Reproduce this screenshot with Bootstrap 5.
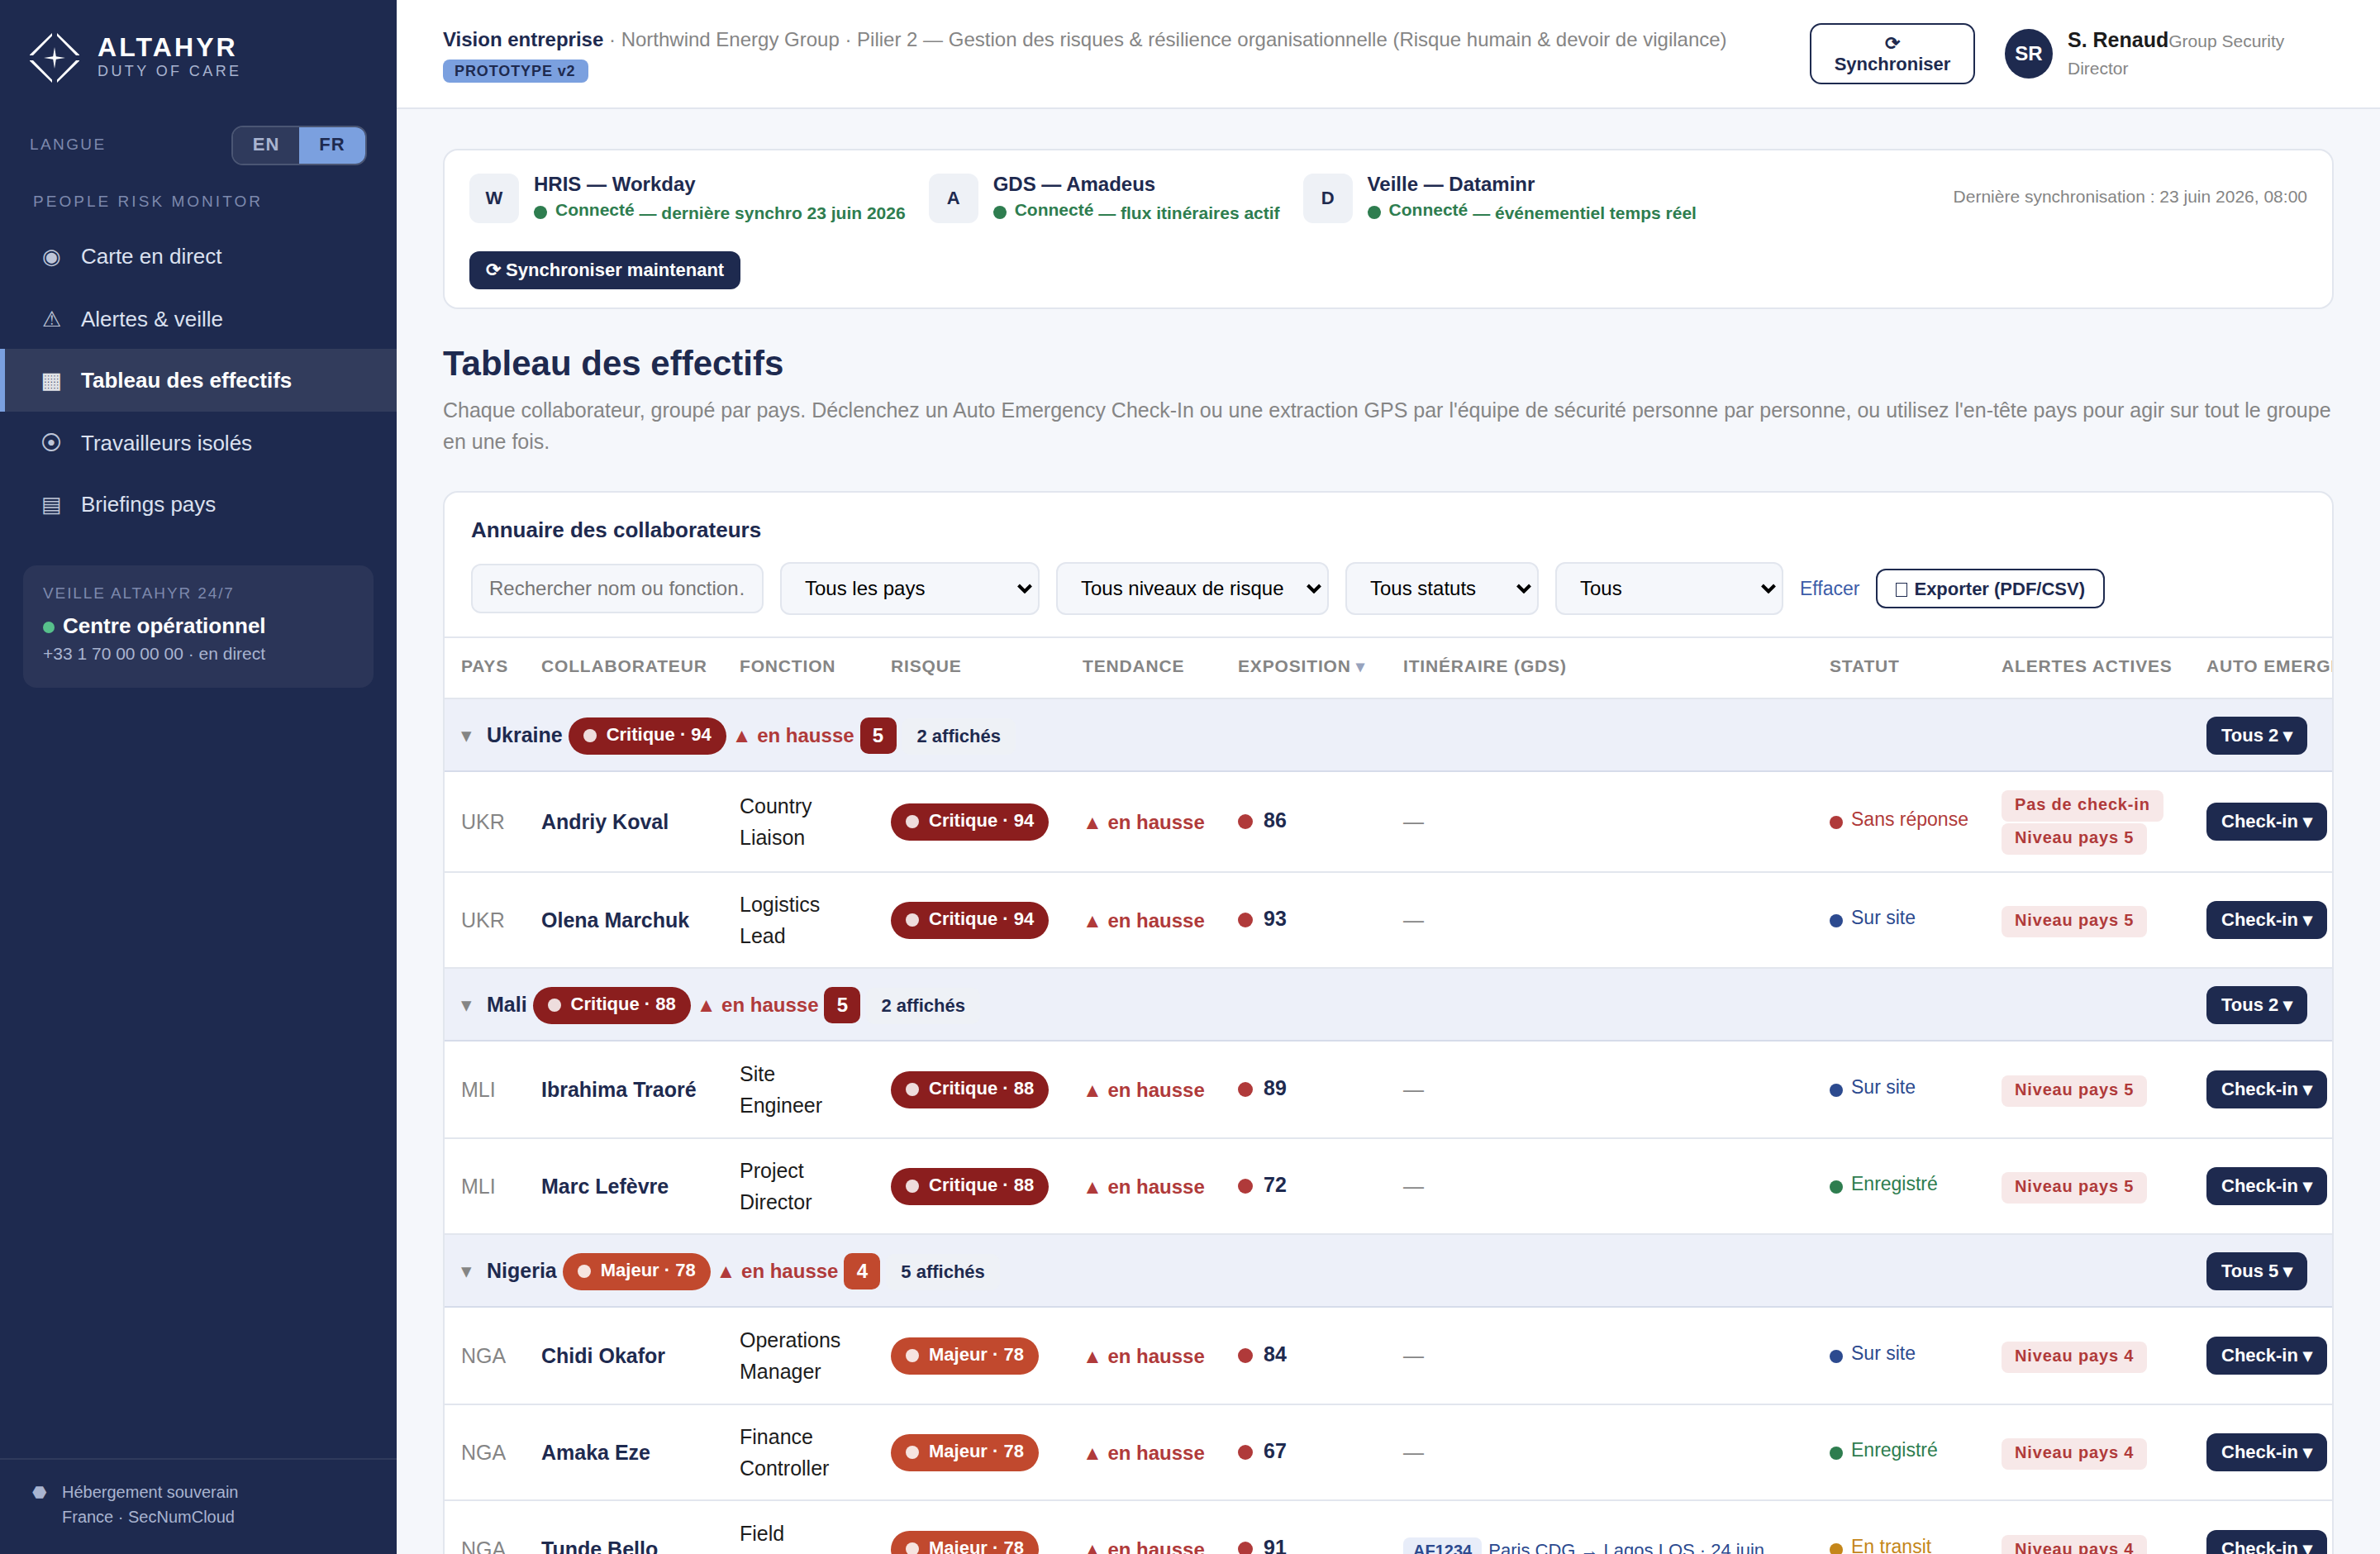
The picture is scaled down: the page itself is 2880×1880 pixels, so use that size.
<!DOCTYPE html>
<html lang="fr">
<head>
    <meta charset="UTF-8">
    <meta name="viewport" content="width=device-width, initial-scale=1">
    <title>Altahyr - Tableau des effectifs</title>
    <link rel="stylesheet" href="https://cdn.jsdelivr.net/npm/bootstrap@5.3.0/dist/css/bootstrap.min.css">
    <style>
        :root {
            --navy: #1e2a4f;
            --sky: #7ba0df;
            --line: #e2e6ee;
            --paper: #f5f7fb;
            --grey: #858585;
            --red: #b03a3a;
            --green: #2e7d4f;
            --blue: #2c4a8f;
        }

        body {
            background-color: var(--paper);
            color: #1c1c1c;
            font-family: "Liberation Sans", Arial, sans-serif;
            font-size: 25px;
            line-height: 38px;
            height: 1880px;
            overflow: hidden;
        }

        /* Sidebar */
        .sidebar {
            width: 480px;
            height: 1880px;
            background-color: var(--navy);
            padding-top: 40px;
        }

        .brand {
            padding-left: 36px;
            gap: 22px;
            height: 60px;
        }

        .brand-text {
            margin-top: -5px;
        }

        .brand-name {
            font-size: 32px;
            line-height: 36px;
            letter-spacing: 3.1px;
            color: #fff;
        }

        .brand-sub {
            font-size: 18px;
            line-height: 22px;
            letter-spacing: 3.4px;
            color: #a9b4d0;
        }

        .lang-row {
            margin-top: 52px;
            padding: 0 36px;
            height: 48px;
        }

        .side-label {
            font-size: 19px;
            line-height: 28px;
            color: #7d89ad;
        }

        .lang-row .side-label {
            letter-spacing: 2.4px;
            padding-bottom: 3px;
        }

        .lang-switch {
            border: 2px solid #4b5674;
            border-radius: 14px;
            overflow: hidden;
            height: 48px;
        }

        .lang-switch span {
            width: 80px;
            text-align: center;
            font-size: 22px;
            line-height: 42px;
            letter-spacing: 1px;
            background-color: #2f3a5c;
            color: #a9b4d0;
        }

        .lang-switch .on {
            background-color: var(--sky);
            color: var(--navy);
        }

        .section-label {
            margin: 30px 0 14px 40px;
            letter-spacing: 3.04px;
        }

        .side-nav .nav-link {
            display: flex;
            height: 75px;
            align-items: center;
            padding: 0 0 0 44px;
            border-left: 6px solid transparent;
            border-radius: 0;
            font-size: 26px;
            color: #dbe1f0;
        }

        .side-nav .nav-link:nth-child(even) {
            padding-top: 2px;
        }

        .side-nav .nav-link.active {
            height: 76px;
            margin-bottom: -1px;
            background-color: #323c5c;
            border-left-color: var(--sky);
            color: #fff;
            font-weight: 700;
        }

        .nav-ico {
            width: 24px;
            margin-right: 24px;
            display: flex;
            justify-content: center;
            opacity: .85;
        }

        .ops-box {
            margin: 37px 28px 0;
            height: 148px;
            padding: 19px 24px;
            border-radius: 16px;
            background-color: #2b3558;
        }

        .ops-box .side-label {
            line-height: 30px;
            letter-spacing: 1.9px;
        }

        .ops-name {
            margin-top: 4px;
            font-size: 26px;
            line-height: 40px;
            color: #fff;
        }

        .ops-dot {
            width: 14px;
            height: 14px;
            margin: 4px 10px 0 0;
            border-radius: 50%;
            background-color: #57c08b;
        }

        .ops-phone {
            font-size: 21px;
            line-height: 28px;
            color: #a9b4d0;
        }

        .side-foot {
            border-top: 2px solid #2f3a5c;
            padding: 24px 0 30px 39px;
            font-size: 20px;
            line-height: 30px;
            color: #a9b4d0;
        }

        .side-foot .hexa {
            width: 36px;
        }

        .dot {
            display: inline-block;
            width: 16px;
            height: 16px;
            border-radius: 50%;
            background-color: currentColor;
            margin-right: 10px;
        }

        .raise {
            position: relative;
            bottom: 4px;
        }

        /* Top bar */
        .topbar {
            height: 132px;
            background-color: #fff;
            border-bottom: 2px solid var(--line);
            padding: 0 56px;
        }

        .crumbs {
            font-size: 24px;
            line-height: 38px;
            padding-bottom: 2px;
            color: var(--grey);
        }

        .navy {
            color: var(--navy);
        }

        .proto {
            display: block;
            width: 176px;
            margin-top: 5px;
            padding: 0 14px;
            border-radius: 8px;
            font-size: 18px;
            line-height: 28px;
            letter-spacing: .9px;
            font-weight: 700;
            white-space: nowrap;
            background-color: var(--sky);
            color: var(--navy);
        }

        .action {
            border: 0;
            border-radius: 12px;
            padding: 0 18px;
            font-size: 22px;
            font-weight: 700;
            line-height: 46px;
            white-space: nowrap;
            color: #fff;
            background-color: var(--navy);
            vertical-align: middle;
        }

        .action-line {
            border: 2px solid var(--navy);
            background-color: #fff;
            color: var(--navy);
        }

        .sync-top {
            width: 200px;
            height: 74px;
            border-radius: 14px;
            line-height: 25px;
            margin-right: 36px;
        }

        .avatar {
            width: 58px;
            height: 60px;
            border-radius: 50%;
            background-color: var(--navy);
            color: #fff;
            font-size: 24px;
            font-weight: 700;
            margin-right: 18px;
        }

        .who {
            width: 322px;
            font-size: 24px;
            line-height: 32px;
        }

        .who b {
            font-size: 25px;
        }

        .who span {
            font-size: 21px;
            color: var(--grey);
        }

        /* Content */
        .content {
            padding: 48px 56px 0;
        }

        .panel {
            background-color: #fff;
            border: 2px solid var(--line);
            border-radius: 18px;
            overflow: hidden;
        }

        .sources {
            height: 194px;
            padding: 22px 30px;
        }

        .source {
            height: 72px;
            margin-right: 28px;
        }

        .source-ico {
            width: 60px;
            height: 60px;
            margin-right: 18px;
            border-radius: 12px;
            background-color: #eef1f6;
            font-size: 22px;
            font-weight: 700;
        }

        .source-name {
            font-size: 24px;
            line-height: 37px;
        }

        .source-state {
            font-size: 21px;
            line-height: 33px;
            padding-bottom: 3px;
            color: var(--green);
        }

        .last-sync {
            font-size: 21px;
            color: var(--grey);
            padding-bottom: 5px;
        }

        .page-title {
            margin: 39px 0 10px;
            font-size: 42px;
            line-height: 54px;
            font-weight: 700;
        }

        .page-text {
            margin-bottom: 41px;
            color: var(--grey);
        }

        .filters {
            padding: 25px 32px 26px;
            border-bottom: 2px solid var(--line);
        }

        .filters h2 {
            font-size: 26px;
            line-height: 40px;
            font-weight: 700;
            margin-bottom: 19px;
        }

        .filters form {
            gap: 20px;
        }

        .filters .form-control,
        .filters .form-select {
            border: 2px solid var(--line);
            border-radius: 12px;
            background-color: var(--paper);
            font-size: 24px;
            color: #000;
        }

        .filters .form-control {
            width: 354px;
            height: 60px;
            padding: 0 20px;
        }

        .filters .form-control::placeholder {
            color: #757575;
        }

        .filters .form-select {
            height: 64px;
            padding: 0 0 0 28px;
            background-image: url("data:image/svg+xml,%3csvg xmlns='http://www.w3.org/2000/svg' viewBox='0 0 18 12'%3e%3cpath fill='none' stroke='%23000' stroke-width='4' d='M1.5 2l7.500 7.500L16.500 2'/%3e%3c/svg%3e");
            background-position: right 7px center;
            background-size: 18px 12px;
        }

        .w-pays { width: 314px; }
        .w-risque { width: 330px; }
        .w-statut { width: 234px; }
        .w-tous { width: 276px; }

        .clear-link {
            font-size: 23px;
            color: #3c5ca8;
            text-decoration: none;
        }

        .export {
            height: 48px;
            line-height: 43px;
            padding: 0 22px;
        }

        .sheet-ico {
            display: inline-block;
            width: 14px;
            height: 17px;
            border: 1px solid var(--navy);
            margin-right: 8px;
            vertical-align: -2px;
        }

        /* Directory table */
        .staff {
            width: 2600px;
            table-layout: fixed;
            border-collapse: separate;
            border-spacing: 0;
        }

        .staff th,
        .staff td {
            padding: 0 20px;
            border-bottom: 2px solid var(--line);
            vertical-align: middle;
            white-space: nowrap;
        }

        .staff th {
            height: 74px;
            padding-bottom: 4px;
            font-size: 21px;
            letter-spacing: .84px;
            color: var(--grey);
        }

        .staff th span {
            font-size: 20px;
            line-height: 1;
            color: #97a3bd;
        }

        .staff .group-row td {
            height: 88px;
            padding-top: 2px;
            background-color: #edf0f9;
            border-bottom-color: #d6dcea;
        }

        .r122 td { height: 122px; }
        .r118 td { height: 118px; }
        .r116 td { height: 116px; }

        .iso,
        .caret {
            color: var(--grey);
        }

        .caret {
            display: inline-block;
            width: 31px;
        }

        .pill {
            display: inline-block;
            padding: 0 18px;
            border-radius: 23px;
            font-size: 22px;
            line-height: 45px;
            font-weight: 700;
            color: #fff;
        }

        .pill .dot {
            margin-right: 12px;
            opacity: .85;
        }

        .pill .raise,
        .score .raise {
            bottom: 2px;
        }

        .critique { background-color: #8b1e1e; }
        .majeur { background-color: #c1492e; }

        .trend {
            font-size: 24px;
            font-weight: 700;
            color: var(--red);
        }

        .level {
            display: inline-block;
            width: 44px;
            border-radius: 10px;
            text-align: center;
            font-size: 24px;
            font-weight: 700;
            line-height: 44px;
            color: #fff;
        }

        .shown {
            display: inline-block;
            padding: 0 18px;
            border-radius: 10px;
            background-color: #eef1f6;
            font-size: 22px;
            font-weight: 700;
            line-height: 44px;
        }

        .score .dot {
            width: 18px;
            height: 18px;
            margin-right: 13px;
            color: var(--red);
        }

        .state {
            font-size: 23px;
        }

        .st-red { color: var(--red); }
        .st-blue { color: var(--blue); }
        .st-green { color: var(--green); }
        .st-amber { color: #c4861a; }

        .tag {
            display: inline-block;
            padding: 0 16px 4px;
            border-radius: 8px;
            background-color: #f7e8e8;
            color: var(--red);
            font-size: 20px;
            font-weight: 700;
            line-height: 34px;
            letter-spacing: .84px;
        }

        .tags {
            gap: 2px;
            padding-top: 2px;
        }

        .flight {
            display: inline-block;
            padding: 0 12px;
            margin-right: 2px;
            border-radius: 8px;
            background-color: #e8edf9;
            font-size: 20px;
            font-weight: 700;
            line-height: 32px;
        }

        .staff .route {
            padding-top: 3px;
            font-size: 22px;
            color: var(--blue);
        }
    </style>
</head>
<body>

<div class="d-flex">
    <aside class="sidebar d-flex flex-column flex-shrink-0">
        <div class="brand d-flex align-items-center">
            <svg width="60" height="60" viewBox="0 0 60 60" fill="#fff">
                <path d="M27 0V3.600L4 27H0V26.200ZM33 0V3.600L56 27H60V26.200ZM27 60V56.400L4 33H0V33.800ZM33 60V56.400L56 33H60V33.800Z"/>
                <path d="M30 17L31.800 28.200L43 30L31.800 31.800L30 43L28.200 31.800L17 30L28.200 28.200Z"/>
            </svg>
            <div class="brand-text">
                <div class="brand-name fw-bold">ALTAHYR</div>
                <div class="brand-sub">DUTY OF CARE</div>
            </div>
        </div>

        <div class="lang-row d-flex justify-content-between align-items-center">
            <span class="side-label">LANGUE</span>
            <div class="lang-switch d-flex fw-bold">
                <span>EN</span>
                <span class="on">FR</span>
            </div>
        </div>

        <div class="side-label section-label">PEOPLE RISK MONITOR</div>
        <nav class="side-nav nav flex-column">
            <a class="nav-link" href="#"><span class="nav-ico">◉</span>Carte en direct</a>
            <a class="nav-link" href="#"><span class="nav-ico">⚠</span>Alertes &amp; veille</a>
            <a class="nav-link active" href="#"><span class="nav-ico">▦</span>Tableau des effectifs</a>
            <a class="nav-link" href="#"><span class="nav-ico">⦿</span>Travailleurs isolés</a>
            <a class="nav-link" href="#"><span class="nav-ico">▤</span>Briefings pays</a>
        </nav>

        <div class="ops-box">
            <div class="side-label">VEILLE ALTAHYR 24/7</div>
            <div class="ops-name fw-bold d-flex align-items-center">
                <span class="ops-dot"></span>Centre opérationnel
            </div>
            <div class="ops-phone">+33 1 70 00 00 00 · en direct</div>
        </div>

        <div class="side-foot mt-auto d-flex">
            <span class="hexa">⬣</span>
            <span>Hébergement souverain<br>France · SecNumCloud</span>
        </div>
    </aside>

    <main class="flex-grow-1 overflow-hidden">
        <header class="topbar d-flex align-items-center">
            <div class="crumbs me-auto">
                <b class="navy">Vision entreprise</b> · Northwind Energy Group · Pilier 2 — Gestion des risques &amp; résilience organisationnelle (Risque humain &amp; devoir de vigilance)
                <span class="proto">PROTOTYPE v2</span>
            </div>
            <button type="button" class="action action-line sync-top">⟳<br>Synchroniser</button>
            <div class="avatar d-flex align-items-center justify-content-center">SR</div>
            <div class="who"><b>S. Renaud</b><span>Group Security<br>Director</span></div>
        </header>

        <div class="content">
            <section class="panel sources">
                <div class="d-flex">
                    <div class="source d-flex align-items-center">
                        <div class="source-ico navy d-flex align-items-center justify-content-center">W</div>
                        <div class="fw-bold">
                            <div class="source-name navy">HRIS — Workday</div>
                            <div class="source-state"><span class="dot"></span><span class="raise">Connecté</span> — dernière synchro 23 juin 2026</div>
                        </div>
                    </div>
                    <div class="source d-flex align-items-center">
                        <div class="source-ico navy d-flex align-items-center justify-content-center">A</div>
                        <div class="fw-bold">
                            <div class="source-name navy">GDS — Amadeus</div>
                            <div class="source-state"><span class="dot"></span><span class="raise">Connecté</span> — flux itinéraires actif</div>
                        </div>
                    </div>
                    <div class="source d-flex align-items-center">
                        <div class="source-ico navy d-flex align-items-center justify-content-center">D</div>
                        <div class="fw-bold">
                            <div class="source-name navy">Veille — Dataminr</div>
                            <div class="source-state"><span class="dot"></span><span class="raise">Connecté</span> — événementiel temps réel</div>
                        </div>
                    </div>
                    <div class="last-sync ms-auto align-self-center">Dernière synchronisation : 23 juin 2026, 08:00</div>
                </div>
                <div class="d-flex pt-1 mt-4">
                    <button type="button" class="action px-3"><span class="px-1">⟳ Synchroniser maintenant</span></button>
                </div>
            </section>

            <h1 class="page-title navy">Tableau des effectifs</h1>
            <p class="page-text">Chaque collaborateur, groupé par pays. Déclenchez un Auto Emergency Check-In ou une extraction GPS par l'équipe de sécurité personne par personne, ou utilisez l'en-tête pays pour agir sur tout le groupe en une fois.</p>

            <section class="panel">
                <div class="filters">
                    <h2 class="navy">Annuaire des collaborateurs</h2>
                    <form class="d-flex align-items-center">
                        <input type="text" class="form-control" placeholder="Rechercher nom ou fonction…">
                        <select class="form-select w-pays"><option>Tous les pays</option></select>
                        <select class="form-select w-risque"><option>Tous niveaux de risque</option></select>
                        <select class="form-select w-statut"><option>Tous statuts</option></select>
                        <select class="form-select w-tous"><option>Tous</option></select>
                        <a class="clear-link" href="#">Effacer</a>
                        <button type="button" class="action action-line export"><span class="sheet-ico"></span>Exporter (PDF/CSV)</button>
                    </form>
                </div>

                <table class="staff">
                    <colgroup>
                        <col style="width: 97px">
                        <col style="width: 240px">
                        <col style="width: 183px">
                        <col style="width: 232px">
                        <col style="width: 188px">
                        <col style="width: 200px">
                        <col style="width: 516px">
                        <col style="width: 208px">
                        <col style="width: 248px">
                        <col>
                    </colgroup>
                    <thead>
                        <tr>
                            <th>PAYS</th>
                            <th>COLLABORATEUR</th>
                            <th>FONCTION</th>
                            <th>RISQUE</th>
                            <th>TENDANCE</th>
                            <th>EXPOSITION <span>▾</span></th>
                            <th>ITINÉRAIRE (GDS)</th>
                            <th>STATUT</th>
                            <th>ALERTES ACTIVES</th>
                            <th>AUTO EMERGENCY CHECK-IN</th>
                        </tr>
                    </thead>
                    <tbody>
                        <tr class="group-row">
                            <td colspan="9"><span class="caret">▾</span><b class="navy">Ukraine</b> <span class="pill critique"><span class="dot"></span><span class="raise">Critique · 94</span></span> <span class="trend">▲ en hausse</span> <span class="level critique">5</span> <span class="shown navy">2 affichés</span></td>
                            <td><button type="button" class="action">Tous 2 ▾</button></td>
                        </tr>
                        <tr class="r122">
                            <td class="iso">UKR</td>
                            <td><b class="navy">Andriy Koval</b></td>
                            <td>Country<br>Liaison</td>
                            <td><span class="pill critique"><span class="dot"></span><span class="raise">Critique · 94</span></span></td>
                            <td><span class="trend">▲ en hausse</span></td>
                            <td class="score"><span class="dot"></span><b class="raise navy">86</b></td>
                            <td class="iso">—</td>
                            <td><span class="state st-red"><span class="dot"></span><span class="raise">Sans réponse</span></span></td>
                            <td>
                                <div class="tags d-flex flex-column align-items-start">
                                    <span class="tag">Pas de check-in</span>
                                    <span class="tag">Niveau pays 5</span>
                                </div>
                            </td>
                            <td><button type="button" class="action">Check-in ▾</button></td>
                        </tr>
                        <tr class="r116">
                            <td class="iso">UKR</td>
                            <td><b class="navy">Olena Marchuk</b></td>
                            <td>Logistics<br>Lead</td>
                            <td><span class="pill critique"><span class="dot"></span><span class="raise">Critique · 94</span></span></td>
                            <td><span class="trend">▲ en hausse</span></td>
                            <td class="score"><span class="dot"></span><b class="raise navy">93</b></td>
                            <td class="iso">—</td>
                            <td><span class="state st-blue"><span class="dot"></span><span class="raise">Sur site</span></span></td>
                            <td><span class="tag">Niveau pays 5</span></td>
                            <td><button type="button" class="action">Check-in ▾</button></td>
                        </tr>

                        <tr class="group-row">
                            <td colspan="9"><span class="caret">▾</span><b class="navy">Mali</b> <span class="pill critique"><span class="dot"></span><span class="raise">Critique · 88</span></span> <span class="trend">▲ en hausse</span> <span class="level critique">5</span> <span class="shown navy">2 affichés</span></td>
                            <td><button type="button" class="action">Tous 2 ▾</button></td>
                        </tr>
                        <tr class="r118">
                            <td class="iso">MLI</td>
                            <td><b class="navy">Ibrahima Traoré</b></td>
                            <td>Site<br>Engineer</td>
                            <td><span class="pill critique"><span class="dot"></span><span class="raise">Critique · 88</span></span></td>
                            <td><span class="trend">▲ en hausse</span></td>
                            <td class="score"><span class="dot"></span><b class="raise navy">89</b></td>
                            <td class="iso">—</td>
                            <td><span class="state st-blue"><span class="dot"></span><span class="raise">Sur site</span></span></td>
                            <td><span class="tag">Niveau pays 5</span></td>
                            <td><button type="button" class="action">Check-in ▾</button></td>
                        </tr>
                        <tr class="r116">
                            <td class="iso">MLI</td>
                            <td><b class="navy">Marc Lefèvre</b></td>
                            <td>Project<br>Director</td>
                            <td><span class="pill critique"><span class="dot"></span><span class="raise">Critique · 88</span></span></td>
                            <td><span class="trend">▲ en hausse</span></td>
                            <td class="score"><span class="dot"></span><b class="raise navy">72</b></td>
                            <td class="iso">—</td>
                            <td><span class="state st-green"><span class="dot"></span><span class="raise">Enregistré</span></span></td>
                            <td><span class="tag">Niveau pays 5</span></td>
                            <td><button type="button" class="action">Check-in ▾</button></td>
                        </tr>

                        <tr class="group-row">
                            <td colspan="9"><span class="caret">▾</span><b class="navy">Nigeria</b> <span class="pill majeur"><span class="dot"></span><span class="raise">Majeur · 78</span></span> <span class="trend">▲ en hausse</span> <span class="level majeur">4</span> <span class="shown navy">5 affichés</span></td>
                            <td><button type="button" class="action">Tous 5 ▾</button></td>
                        </tr>
                        <tr class="r118">
                            <td class="iso">NGA</td>
                            <td><b class="navy">Chidi Okafor</b></td>
                            <td>Operations<br>Manager</td>
                            <td><span class="pill majeur"><span class="dot"></span><span class="raise">Majeur · 78</span></span></td>
                            <td><span class="trend">▲ en hausse</span></td>
                            <td class="score"><span class="dot"></span><b class="raise navy">84</b></td>
                            <td class="iso">—</td>
                            <td><span class="state st-blue"><span class="dot"></span><span class="raise">Sur site</span></span></td>
                            <td><span class="tag">Niveau pays 4</span></td>
                            <td><button type="button" class="action">Check-in ▾</button></td>
                        </tr>
                        <tr class="r116">
                            <td class="iso">NGA</td>
                            <td><b class="navy">Amaka Eze</b></td>
                            <td>Finance<br>Controller</td>
                            <td><span class="pill majeur"><span class="dot"></span><span class="raise">Majeur · 78</span></span></td>
                            <td><span class="trend">▲ en hausse</span></td>
                            <td class="score"><span class="dot"></span><b class="raise navy">67</b></td>
                            <td class="iso">—</td>
                            <td><span class="state st-green"><span class="dot"></span><span class="raise">Enregistré</span></span></td>
                            <td><span class="tag">Niveau pays 4</span></td>
                            <td><button type="button" class="action">Check-in ▾</button></td>
                        </tr>
                        <tr class="r118">
                            <td class="iso">NGA</td>
                            <td><b class="navy">Tunde Bello</b></td>
                            <td>Field<br>Technician</td>
                            <td><span class="pill majeur"><span class="dot"></span><span class="raise">Majeur · 78</span></span></td>
                            <td><span class="trend">▲ en hausse</span></td>
                            <td class="score"><span class="dot"></span><b class="raise navy">91</b></td>
                            <td class="route"><span class="flight">AF1234</span> Paris CDG → Lagos LOS · 24 juin</td>
                            <td><span class="state st-amber"><span class="dot"></span><span class="raise">En transit</span></span></td>
                            <td><span class="tag">Niveau pays 4</span></td>
                            <td><button type="button" class="action">Check-in ▾</button></td>
                        </tr>
                    </tbody>
                </table>
            </section>
        </div>
    </main>
</div>

<script src="https://cdn.jsdelivr.net/npm/bootstrap@5.3.0/dist/js/bootstrap.bundle.min.js"></script>
</body>
</html>
